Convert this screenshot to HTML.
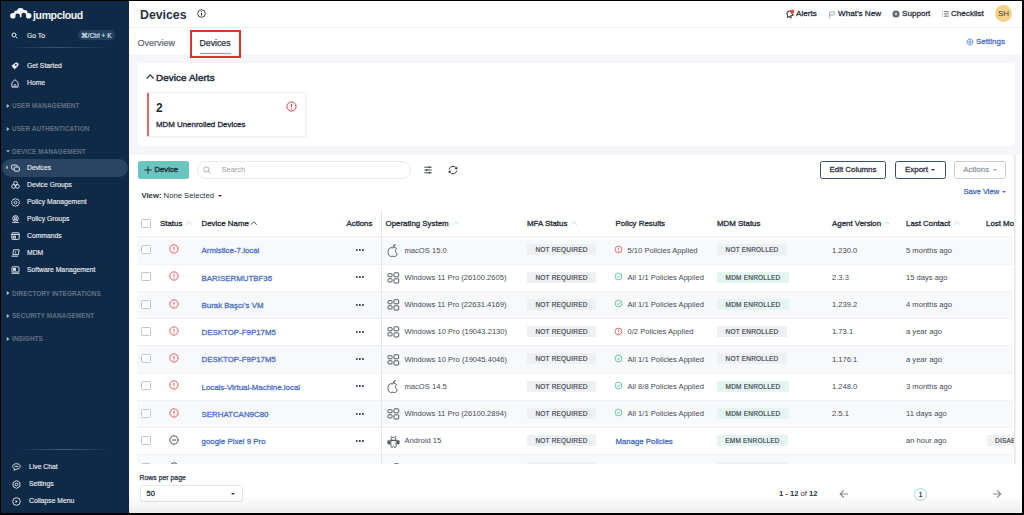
<!DOCTYPE html>
<html><head><meta charset="utf-8">
<style>
*{margin:0;padding:0;box-sizing:border-box}
html,body{width:1024px;height:515px;overflow:hidden;background:#000;font-family:"Liberation Sans",sans-serif}
.a{position:absolute}
#frame{position:absolute;left:1px;top:1px;width:1021px;height:512px;background:#fff;overflow:hidden}
#side{position:absolute;left:0;top:0;width:128px;height:512px;background:#0f2a47}
.si{position:absolute;left:26px;font-size:6.8px;color:#eef1f5;white-space:nowrap;line-height:10px;-webkit-text-stroke:0.12px #eef1f5}
.sh{position:absolute;left:11px;font-size:6.4px;font-weight:bold;color:#617084;white-space:nowrap;line-height:10px;letter-spacing:0.1px}
.car{position:absolute;left:4.8px;width:0;height:0;border-top:1.7px solid transparent;border-bottom:1.7px solid transparent;border-left:2.4px solid #b8c0ca}
.ic{position:absolute;left:10px}
.hdr{font-size:8.1px;color:#2b3340;line-height:10px;white-space:nowrap;-webkit-text-stroke:0.3px #2b3340}
.th{font-size:7.9px;color:#2f3742;line-height:10px;white-space:nowrap;-webkit-text-stroke:0.35px #2f3742}
.td{font-size:7.6px;color:#444b55;line-height:10px;white-space:nowrap}
.dn{font-size:7.9px;color:#4f72c2;line-height:10px;white-space:nowrap;-webkit-text-stroke:0.3px #4f72c2}
.badge{height:11px;background:#eef0f3;font-size:6.5px;color:#363d48;letter-spacing:0.2px;line-height:11px;text-align:center;white-space:nowrap;-webkit-text-stroke:0.15px #363d48}
.btn{height:17.5px;border:1px solid #3c4f68;border-radius:2.5px;font-size:7.9px;-webkit-text-stroke:0.3px currentColor;color:#2b3340;text-align:center;line-height:15.5px;background:#fff;white-space:nowrap}
</style></head>
<body>
<div id="frame">
  <div id="side">
    <!-- logo -->
    <svg class="a" style="left:8.5px;top:6.5px" width="22" height="12" viewBox="0 0 22 12">
      <g fill="#f4f6f9">
        <circle cx="2.9" cy="7.8" r="2.8"/>
        <circle cx="18.6" cy="7.8" r="2.8"/>
        <circle cx="10.5" cy="3.5" r="3.4"/>
        <circle cx="14.8" cy="4.8" r="2.8"/>
        <circle cx="6.6" cy="5.2" r="2.6"/>
        <rect x="2.9" y="5" width="15.7" height="4.6"/>
      </g>
      <g fill="#0f2a47">
        <rect x="5.4" y="5.6" width="4.5" height="9" rx="2.25"/>
        <rect x="11.5" y="4.8" width="4.6" height="9" rx="2.3"/>
        <rect x="9.5" y="9.3" width="2.5" height="3"/>
      </g>
    </svg>
    <div class="a" style="left:32px;top:8px;font-size:10.5px;font-weight:bold;color:#f4f6f9;line-height:12px;letter-spacing:-0.35px">jumpcloud</div>
    <!-- go to -->
    <svg class="a" style="left:10px;top:31px" width="7" height="7" viewBox="0 0 7 7"><circle cx="3" cy="3" r="2" fill="none" stroke="#e8ecf1" stroke-width="1"/><path d="M4.5 4.5L6.3 6.3" stroke="#e8ecf1" stroke-width="1"/></svg>
    <div class="si" style="top:30px">Go To</div>
    <div class="a" style="left:76.7px;top:28.7px;width:37px;height:10.8px;border-radius:5px;background:#25405e;color:#dfe5ec;font-size:6.5px;line-height:11px;text-align:center;white-space:nowrap;-webkit-text-stroke:0.15px #dfe5ec">⌘/Ctrl + K</div>
    <div class="a" style="left:8px;top:46.4px;width:104px;height:1px;background:linear-gradient(90deg,rgba(80,105,135,0),rgba(80,105,135,.65) 45%,rgba(80,105,135,0))"></div>
    <!-- items -->
    <svg class="ic" style="top:60.5px" width="8" height="8" viewBox="0 0 8 8"><ellipse cx="4.5" cy="3.5" rx="3.4" ry="2.2" transform="rotate(-40 4.5 3.5)" fill="#eef1f5"/><path d="M2.2 2.6L0.3 3.4L1.3 4.8ZM3.6 5.4L3 7.6L4.6 6.6Z" fill="#eef1f5"/><circle cx="4.9" cy="3.1" r="1" fill="#0f2a47"/></svg>
    <div class="si" style="top:60px">Get Started</div>
    <svg class="ic" style="top:77.5px" width="8" height="9" viewBox="0 0 8 9"><path d="M0.9 3.6L4 0.7L7.1 3.6V8.1H0.9Z" fill="none" stroke="#eef1f5" stroke-width="0.9" stroke-linejoin="round"/><path d="M3.1 8.1V6.2C3.1 5.7 3.5 5.4 4 5.4C4.5 5.4 4.9 5.7 4.9 6.2V8.1" fill="none" stroke="#eef1f5" stroke-width="0.8"/></svg>
    <div class="si" style="top:77px">Home</div>

    <svg class="a" style="left:4.5px;top:103px" width="4" height="4" viewBox="0 0 4 4"><path d="M0.7 0.1L3.5 2L0.7 3.9Z" fill="#b8c0ca"/></svg><div class="sh" style="top:100.45px">USER MANAGEMENT</div>
    <svg class="a" style="left:4.5px;top:126px" width="4" height="4" viewBox="0 0 4 4"><path d="M0.7 0.1L3.5 2L0.7 3.9Z" fill="#b8c0ca"/></svg><div class="sh" style="top:123.05px">USER AUTHENTICATION</div>
    <svg class="a" style="left:4.5px;top:148.5px" width="4" height="3" viewBox="0 0 4 3"><path d="M0.2 0.3H3.8L2 2.6Z" fill="#b8c0ca"/></svg><div class="sh" style="top:145.65px">DEVICE MANAGEMENT</div>

    <div class="a" style="left:1px;top:158px;width:126px;height:18px;border-radius:9px;background:#2a4462"></div>
    <div class="a" style="left:4.5px;top:165.3px;width:2.4px;height:2.4px;border-radius:50%;background:#5fc6bd"></div>
    <svg class="ic" style="top:163px" width="9" height="8" viewBox="0 0 9 8"><rect x="0.6" y="1" width="5.5" height="4.2" rx="0.6" fill="none" stroke="#eef1f5" stroke-width="0.9"/><rect x="3.2" y="3" width="5.2" height="4.2" rx="0.6" fill="#2a4462" stroke="#eef1f5" stroke-width="0.9"/></svg>
    <div class="si" style="top:162px">Devices</div>
    <svg class="ic" style="top:179.5px" width="9" height="8" viewBox="0 0 9 8"><g fill="none" stroke="#eef1f5" stroke-width="0.9"><circle cx="4.5" cy="2.4" r="1.9"/><circle cx="2.6" cy="5.4" r="1.9"/><circle cx="6.4" cy="5.4" r="1.9"/></g></svg>
    <div class="si" style="top:179px">Device Groups</div>
    <svg class="ic" style="top:196.5px" width="9" height="9" viewBox="0 0 9 9"><g fill="none" stroke="#eef1f5" stroke-width="0.9"><path d="M4.5 0.6L5.6 1.3L6.9 1.2L7.4 2.4L8.4 3.3L8 4.5L8.4 5.7L7.4 6.6L6.9 7.8L5.6 7.7L4.5 8.4L3.4 7.7L2.1 7.8L1.6 6.6L0.6 5.7L1 4.5L0.6 3.3L1.6 2.4L2.1 1.2L3.4 1.3Z"/><circle cx="4.5" cy="4.5" r="1.4"/></g></svg>
    <div class="si" style="top:196px">Policy Management</div>
    <svg class="ic" style="top:213.5px" width="9" height="8" viewBox="0 0 9 8"><g fill="none" stroke="#eef1f5" stroke-width="0.9"><circle cx="4.5" cy="3.4" r="2.8"/><circle cx="4.5" cy="3" r="1.1"/><path d="M2.4 5.4C2.8 4.6 3.6 4.3 4.5 4.3C5.4 4.3 6.2 4.6 6.6 5.4M1.2 7.4H7.8"/></g></svg>
    <div class="si" style="top:213px">Policy Groups</div>
    <svg class="ic" style="top:230.5px" width="9" height="8" viewBox="0 0 9 8"><g fill="none" stroke="#eef1f5" stroke-width="0.9"><rect x="0.8" y="0.8" width="7.4" height="6.6" rx="0.6"/><path d="M0.8 2.5H8.2"/><rect x="2.2" y="4.2" width="2.2" height="1.8"/></g></svg>
    <div class="si" style="top:230px">Commands</div>
    <svg class="ic" style="top:248px" width="9" height="8" viewBox="0 0 9 8"><g fill="none" stroke="#eef1f5" stroke-width="0.9"><path d="M2.6 0.8H8.2L7.4 5.6H1.8Z"/><path d="M0.4 7.2H7.2M4.6 2.4V4.4"/></g></svg>
    <div class="si" style="top:247px">MDM</div>
    <svg class="ic" style="top:264.5px" width="9" height="8" viewBox="0 0 9 8"><g fill="none" stroke="#eef1f5" stroke-width="0.9"><rect x="1" y="0.8" width="7" height="5.2" rx="0.5"/><path d="M0.4 7.3H8.6"/><rect x="2.6" y="2.4" width="1.8" height="2"/></g></svg>
    <div class="si" style="top:264px">Software Management</div>

    <svg class="a" style="left:4.5px;top:290px" width="4" height="4" viewBox="0 0 4 4"><path d="M0.7 0.1L3.5 2L0.7 3.9Z" fill="#b8c0ca"/></svg><div class="sh" style="top:287.65px">DIRECTORY INTEGRATIONS</div>
    <svg class="a" style="left:4.5px;top:313px" width="4" height="4" viewBox="0 0 4 4"><path d="M0.7 0.1L3.5 2L0.7 3.9Z" fill="#b8c0ca"/></svg><div class="sh" style="top:310.45px">SECURITY MANAGEMENT</div>
    <svg class="a" style="left:4.5px;top:336px" width="4" height="4" viewBox="0 0 4 4"><path d="M0.7 0.1L3.5 2L0.7 3.9Z" fill="#b8c0ca"/></svg><div class="sh" style="top:332.9px">INSIGHTS</div>

    <div class="a" style="left:18px;top:448px;width:92px;height:1px;background:linear-gradient(90deg,rgba(80,105,135,0),rgba(80,105,135,.8),rgba(80,105,135,0))"></div>
    <svg class="ic" style="left:11px;top:462px" width="9" height="8" viewBox="0 0 9 8"><path d="M4.5 0.7C2.3 0.7 0.7 1.9 0.7 3.4C0.7 4.4 1.4 5.2 2.4 5.7L2 7.3L3.9 6.1C4.1 6.1 4.3 6.1 4.5 6.1C6.7 6.1 8.3 4.9 8.3 3.4C8.3 1.9 6.7 0.7 4.5 0.7Z M2.6 3.4H6.4" fill="none" stroke="#eef1f5" stroke-width="0.9"/></svg>
    <div class="si" style="top:460.6px;left:28px">Live Chat</div>
    <svg class="ic" style="left:11px;top:479px" width="9" height="9" viewBox="0 0 9 9"><path d="M4.5 0.6L7.9 2.5V6.5L4.5 8.4L1.1 6.5V2.5Z" fill="none" stroke="#eef1f5" stroke-width="0.9"/><circle cx="4.5" cy="4.5" r="1.4" fill="none" stroke="#eef1f5" stroke-width="0.9"/></svg>
    <div class="si" style="top:477.6px;left:28px">Settings</div>
    <svg class="ic" style="left:11px;top:496px" width="9" height="9" viewBox="0 0 9 9"><circle cx="4.5" cy="4.5" r="3.8" fill="none" stroke="#eef1f5" stroke-width="0.9"/><path d="M3.6 3L5.6 4.5L3.6 6Z" fill="#eef1f5"/></svg>
    <div class="si" style="top:494.6px;left:28px">Collapse Menu</div>
  </div>
  <!-- MAIN -->
  <div id="main" class="a" style="left:128px;top:0;width:893px;height:512px;background:#f6f6fa">
    <!-- header -->
    <div class="a" style="left:0;top:0;width:893px;height:26.5px;background:#fff;border-bottom:1px solid #f1f2f5"></div>
    <div class="a" style="left:11px;top:6.5px;font-size:12.3px;font-weight:bold;color:#283241;line-height:15px">Devices</div>
    <svg class="a" style="left:68px;top:8px" width="9" height="9" viewBox="0 0 9 9"><circle cx="4.5" cy="4.5" r="3.8" fill="none" stroke="#2b3340" stroke-width="0.9"/><path d="M4.5 4V6.6" stroke="#2b3340" stroke-width="1"/><circle cx="4.5" cy="2.7" r="0.6" fill="#2b3340"/></svg>
    <!-- right header -->
    <svg class="a" style="left:656.3px;top:7.6px" width="10" height="10" viewBox="0 0 10 10"><g transform="rotate(-22 5 5)"><path d="M1.6 7.2C2.2 6.6 2.2 6 2.2 4.8C2.2 3.1 3.3 1.9 4.6 1.9C5.9 1.9 7 3.1 7 4.8C7 6 7 6.6 7.6 7.2Z M3.7 8.2C3.9 8.8 5.3 8.8 5.5 8.2" fill="none" stroke="#2b3340" stroke-width="1"/></g><circle cx="7.3" cy="2.6" r="2.1" fill="#e04848"/></svg>
    <div class="a hdr" style="left:667px;top:8px">Alerts</div>
    <svg class="a" style="left:699.5px;top:9.5px" width="6" height="8" viewBox="0 0 6 8"><path d="M0.7 7.4V0.9H5.2V3.9H0.7" fill="none" stroke="#8d939b" stroke-width="0.75"/></svg>
    <div class="a hdr" style="left:709px;top:8px">What’s New</div>
    <svg class="a" style="left:762.5px;top:9.2px" width="8" height="8" viewBox="0 0 8 8"><circle cx="4" cy="4" r="3.5" fill="#5a616c"/><path d="M4 2.3V5.7M2.3 4H5.7" stroke="#fff" stroke-width="0.75"/></svg>
    <div class="a hdr" style="left:773px;top:8px">Support</div>
    <svg class="a" style="left:812.8px;top:9.6px" width="7" height="6" viewBox="0 0 7 6"><path d="M0.2 0.6H1M0.2 2.9H1M0.2 5.2H1M2 0.6H6.8M2 2.9H6.8M2 5.2H6.8" stroke="#3f4650" stroke-width="0.75"/></svg>
    <div class="a hdr" style="left:822px;top:8px">Checklist</div>
    <div class="a" style="left:865.8px;top:3.7px;width:17.3px;height:17.3px;border-radius:50%;background:#f5d38a;color:#3f3b35;font-size:8px;line-height:17.3px;text-align:center">SH</div>
    <!-- tabs -->
    <div class="a" style="left:0;top:27px;width:893px;height:26px;background:#fff"></div>
    <div class="a" style="left:8.6px;top:36.5px;font-size:9px;color:#5f6670;line-height:10px;-webkit-text-stroke:0.2px #5f6670">Overview</div>
    <div class="a" style="left:70.6px;top:36.5px;font-size:8.7px;color:#2b3340;line-height:10px;-webkit-text-stroke:0.25px #2b3340">Devices</div>
    <div class="a" style="left:70.6px;top:52px;width:31.5px;height:1px;background:#5bbfb8"></div>
    <div class="a" style="left:61.2px;top:29.4px;width:51.2px;height:27.5px;border:2.2px solid #d9362e"></div>
    <svg class="a" style="left:837px;top:37px" width="8" height="8" viewBox="0 0 8 8"><path d="M4 0.8L6.8 2.4V5.6L4 7.2L1.2 5.6V2.4Z" fill="none" stroke="#4a78cc" stroke-width="0.8"/><circle cx="4" cy="4" r="1.2" fill="none" stroke="#4a78cc" stroke-width="0.8"/></svg>
    <div class="a" style="left:847px;top:36px;font-size:8px;color:#4f72c2;line-height:10px;-webkit-text-stroke:0.3px #4f72c2">Settings</div>
    <!-- device alerts card -->
    <div class="a" style="left:9px;top:62px;width:876px;height:82.5px;background:#fff;border-radius:3px"></div>
    <svg class="a" style="left:17px;top:72.3px" width="9" height="7" viewBox="0 0 9 7"><path d="M0.8 5.5L4.2 1.9L7.6 5.5" fill="none" stroke="#2b3340" stroke-width="1.2"/></svg>
    <div class="a" style="left:27px;top:71px;font-size:9.8px;letter-spacing:0.12px;color:#283241;line-height:12px;-webkit-text-stroke:0.5px #283241">Device Alerts</div>
    <div class="a" style="left:18px;top:90.5px;width:159px;height:45px;background:#fff;border:1px solid #f0f1f4;border-left:2px solid #e46a68;border-radius:2px;box-shadow:1px 1px 3px rgba(0,0,0,.05)"></div>
    <div class="a" style="left:27px;top:100px;font-size:12px;font-weight:bold;color:#1f2937;line-height:14px">2</div>
    <div class="a" style="left:27px;top:118.5px;font-size:7.9px;color:#1f2937;line-height:10px;-webkit-text-stroke:0.3px #1f2937">MDM Unenrolled Devices</div>
    <svg class="a" style="left:157px;top:100.2px" width="11" height="11" viewBox="0 0 11 11"><circle cx="5.5" cy="5.5" r="4.6" fill="none" stroke="#d9433b" stroke-width="1"/><path d="M5.5 2.8V6.2" stroke="#d9433b" stroke-width="1.1"/><circle cx="5.5" cy="7.9" r="0.65" fill="#d9433b"/></svg>
    <!-- table section -->
    <div id="tsec" class="a" style="left:1px;top:154px;width:892px;height:358px;background:#fff"></div>
  </div>

  <div id="pg" class="a" style="left:-1px;top:-1px;width:1024px;height:515px">
    <!-- toolbar -->
    <div class="a" style="left:137.5px;top:161px;width:51px;height:17.5px;border-radius:2.5px;background:#6ac5bf"></div>
    <svg class="a" style="left:144px;top:165.8px" width="8" height="8" viewBox="0 0 8 8"><path d="M4 0.3V7.7M0.3 4H7.7" stroke="#1f2d3d" stroke-width="0.95"/></svg>
    <div class="a" style="left:154.5px;top:165px;font-size:7.7px;color:#1f2d3d;line-height:10px;-webkit-text-stroke:0.35px #1f2d3d">Device</div>
    <div class="a" style="left:197px;top:161px;width:214px;height:17.5px;border-radius:9px;border:1px solid #e8eaee;background:#fff"></div>
    <svg class="a" style="left:203px;top:165.6px" width="8" height="8" viewBox="0 0 8 8"><circle cx="3.4" cy="3.4" r="2.6" fill="none" stroke="#9ba1a9" stroke-width="0.85"/><path d="M5.3 5.3L7.4 7.4" stroke="#9ba1a9" stroke-width="0.95"/></svg>
    <div class="a" style="left:221.5px;top:165px;font-size:7.5px;color:#9aa0a8;line-height:10px">Search</div>
    <svg class="a" style="left:423.5px;top:166px" width="8" height="8" viewBox="0 0 8 8"><g stroke="#2b3340" stroke-width="0.9"><path d="M0.3 1.2H7.7M0.3 4H7.7M0.3 6.8H7.7"/></g><g fill="#2b3340"><rect x="4.8" y="0.3" width="1" height="1.8"/><rect x="2.2" y="3.1" width="1" height="1.8"/><rect x="4.8" y="5.9" width="1" height="1.8"/></g></svg>
    <svg class="a" style="left:448px;top:165px" width="10" height="10" viewBox="0 0 10 10"><path d="M1.3 4.4C1.6 2.5 3.2 1.2 5 1.2C6.1 1.2 7.1 1.7 7.8 2.5M8.7 5.6C8.4 7.5 6.8 8.8 5 8.8C3.9 8.8 2.9 8.3 2.2 7.5" fill="none" stroke="#2b3340" stroke-width="1"/><path d="M9.3 1.4V4.3H6.4Z" fill="#2b3340"/><path d="M0.7 8.6V5.7H3.6Z" fill="#2b3340"/></svg>
    <div class="a btn" style="left:820px;top:161px;width:66px">Edit Columns</div>
    <div class="a btn" style="left:894.5px;top:161px;width:51px;padding-right:7px">Export</div>
    <div class="a" style="left:931px;top:168.5px;width:0;height:0;border-left:2px solid transparent;border-right:2px solid transparent;border-top:2.2px solid #2b3340"></div>
    <div class="a btn" style="left:954px;top:161px;width:51.5px;border-color:#c9cdd3;color:#9aa0a8;padding-right:7px">Actions</div>
    <div class="a" style="left:993px;top:168.5px;width:0;height:0;border-left:2px solid transparent;border-right:2px solid transparent;border-top:2.2px solid #a5abb2"></div>
    <div class="a" style="left:963.5px;top:187px;font-size:7.6px;color:#4f72c2;line-height:10px;-webkit-text-stroke:0.3px #4f72c2">Save View</div>
    <div class="a" style="left:1002px;top:190.5px;width:0;height:0;border-left:2px solid transparent;border-right:2px solid transparent;border-top:2.2px solid #4a74c9"></div>
    <div class="a" style="left:141.5px;top:191px;font-size:7.7px;color:#2b3340;line-height:10px;white-space:nowrap"><b>View:</b> None Selected</div>
    <div class="a" style="left:218px;top:195px;width:0;height:0;border-left:2px solid transparent;border-right:2px solid transparent;border-top:2.2px solid #2b3340"></div>
    <!-- table -->
    <div id="tclip" class="a" style="left:0;top:0;width:1013.5px;height:464px;overflow:hidden">
<!--T-->
<div class="a" style="left:141px;top:219px;width:9.5px;height:9px;border:1px solid #c1c5cc;border-radius:1.5px;background:#fff"></div>
<div class="a th" style="left:160px;top:219px;">Status</div>
<div class="a th" style="left:201.5px;top:219px;">Device Name</div>
<div class="a th" style="left:385.5px;top:219px;">Operating System</div>
<div class="a th" style="left:527px;top:219px;">MFA Status</div>
<div class="a th" style="left:615.5px;top:219px;">Policy Results</div>
<div class="a th" style="left:717px;top:219px;">MDM Status</div>
<div class="a th" style="left:832px;top:219px;">Agent Version</div>
<div class="a th" style="left:906px;top:219px;">Last Contact</div>
<div class="a th" style="left:986px;top:219px;">Lost Mode</div>
<div class="a th" style="left:346.5px;top:219px;">Actions</div>
<svg class="a" style="left:184.5px;top:220px" width="8" height="6" viewBox="0 0 8 6"><path d="M0.9 4.7L3.8 1.7L6.7 4.7" fill="none" stroke="#c9ced5" stroke-width="0.9"/></svg>
<svg class="a" style="left:250px;top:220px" width="8" height="6" viewBox="0 0 8 6"><path d="M0.9 4.7L3.8 1.7L6.7 4.7" fill="none" stroke="#3a414b" stroke-width="0.9"/></svg>
<svg class="a" style="left:451.5px;top:220px" width="8" height="6" viewBox="0 0 8 6"><path d="M0.9 4.7L3.8 1.7L6.7 4.7" fill="none" stroke="#c9ced5" stroke-width="0.9"/></svg>
<svg class="a" style="left:569.5px;top:220px" width="8" height="6" viewBox="0 0 8 6"><path d="M0.9 4.7L3.8 1.7L6.7 4.7" fill="none" stroke="#c9ced5" stroke-width="0.9"/></svg>
<svg class="a" style="left:883px;top:220px" width="8" height="6" viewBox="0 0 8 6"><path d="M0.9 4.7L3.8 1.7L6.7 4.7" fill="none" stroke="#c9ced5" stroke-width="0.9"/></svg>
<svg class="a" style="left:953px;top:220px" width="8" height="6" viewBox="0 0 8 6"><path d="M0.9 4.7L3.8 1.7L6.7 4.7" fill="none" stroke="#c9ced5" stroke-width="0.9"/></svg>
<div class="a" style="left:137px;top:236.3px;width:876px;height:27.25px;background:#f8f9fb;border-top:1px solid #f1f2f5"></div>
<div class="a" style="left:141px;top:245.125px;width:9.5px;height:9px;border:1px solid #c1c5cc;border-radius:1.5px;background:#fff"></div>
<svg class="a" style="left:168.5px;top:244.125px" width="10" height="10" viewBox="0 0 10 10"><circle cx="5" cy="5" r="4.15" fill="none" stroke="#df5552" stroke-width="0.95"/><path d="M5 2.9V5.6" stroke="#df5552" stroke-width="1"/><circle cx="5" cy="7.05" r="0.55" fill="#df5552"/></svg>
<div class="a dn" style="left:201.5px;top:246.32500000000002px;">Armistice-7.local</div>
<div class="a" style="left:355.5px;top:249.025px;width:8.5px;height:2px;background:radial-gradient(circle at 1px 1px,#3b4a63 0.8px,transparent 1.05px) 0 0/3.1px 2px repeat-x"></div>
<svg class="a" style="left:387px;top:242.72500000000002px" width="11" height="14" viewBox="0 0 11 14"><path d="M5.6 4.9C6.6 4.4 8.6 4.3 9.6 5.7C8.6 6.4 8.3 7.4 8.4 8.4C8.5 9.6 9.3 10.4 10.3 10.8C10 11.9 9.4 12.7 8.8 13.2C8.2 13.7 7.6 13.6 7 13.4C6.3 13.1 5.2 13.1 4.5 13.4C3.9 13.6 3.3 13.7 2.7 13.1C1.5 11.8 0.9 10.2 1 8.5C1.1 6.3 2.5 4.8 4.1 4.7C4.6 4.7 5.1 4.8 5.6 4.9Z" fill="none" stroke="#4f5660" stroke-width="0.95"/><path d="M5.6 4.4C5.7 3 6.5 1.8 8.6 1.1C8.5 2.6 7.6 3.9 5.6 4.4Z" fill="#4f5660"/></svg>
<div class="a td" style="left:404.5px;top:245.72500000000002px;">macOS 15.0</div>
<div class="a badge" style="left:527px;top:244.425px;width:69px">NOT REQUIRED</div>
<svg class="a" style="left:614.4px;top:244.925px" width="9" height="9" viewBox="0 0 9 9"><circle cx="4.5" cy="4.5" r="3.4" fill="none" stroke="#e06464" stroke-width="0.9"/><path d="M4.5 2.7V4.9" stroke="#e06464" stroke-width="0.9"/><circle cx="4.5" cy="6.2" r="0.5" fill="#e06464"/></svg>
<div class="a td" style="left:627.5px;top:245.72500000000002px;">5/10 Policies Applied</div>
<div class="a badge" style="left:717px;top:244.425px;width:70px;background:#eef0f3">NOT ENROLLED</div>
<div class="a td" style="left:832px;top:245.72500000000002px;">1.230.0</div>
<div class="a td" style="left:906px;top:245.72500000000002px;">5 months ago</div>
<div class="a" style="left:137px;top:263.55px;width:876px;height:27.25px;background:#fff;border-top:1px solid #f1f2f5"></div>
<div class="a" style="left:141px;top:272.375px;width:9.5px;height:9px;border:1px solid #c1c5cc;border-radius:1.5px;background:#fff"></div>
<svg class="a" style="left:168.5px;top:271.375px" width="10" height="10" viewBox="0 0 10 10"><circle cx="5" cy="5" r="4.15" fill="none" stroke="#df5552" stroke-width="0.95"/><path d="M5 2.9V5.6" stroke="#df5552" stroke-width="1"/><circle cx="5" cy="7.05" r="0.55" fill="#df5552"/></svg>
<div class="a dn" style="left:201.5px;top:273.575px;">BARISERMUTBF36</div>
<div class="a" style="left:355.5px;top:276.27500000000003px;width:8.5px;height:2px;background:radial-gradient(circle at 1px 1px,#3b4a63 0.8px,transparent 1.05px) 0 0/3.1px 2px repeat-x"></div>
<svg class="a" style="left:386.5px;top:271.875px" width="13" height="12" viewBox="0 0 13 12"><g fill="none" stroke="#4f5660" stroke-width="1"><rect x="1" y="1.7" width="4.1" height="3.1" rx="0.7"/><rect x="1" y="6.8" width="4.1" height="3.1" rx="0.7"/><rect x="7" y="0.8" width="4.7" height="4" rx="0.7"/><rect x="7" y="6.8" width="4.7" height="4.2" rx="0.7"/></g></svg>
<div class="a td" style="left:404.5px;top:272.975px;">Windows 11 Pro (26100.2605)</div>
<div class="a badge" style="left:527px;top:271.675px;width:69px">NOT REQUIRED</div>
<svg class="a" style="left:614.4px;top:272.175px" width="9" height="9" viewBox="0 0 9 9"><circle cx="4.5" cy="4.5" r="3.4" fill="none" stroke="#5cc298" stroke-width="0.9"/><path d="M3 4.6L4.1 5.7L6.1 3.5" fill="none" stroke="#5cc298" stroke-width="0.9"/></svg>
<div class="a td" style="left:627.5px;top:272.975px;">All 1/1 Policies Applied</div>
<div class="a badge" style="left:717px;top:271.675px;width:72px;background:#e5f5f2">MDM ENROLLED</div>
<div class="a td" style="left:832px;top:272.975px;">2.3.3</div>
<div class="a td" style="left:906px;top:272.975px;">15 days ago</div>
<div class="a" style="left:137px;top:290.8px;width:876px;height:27.25px;background:#f8f9fb;border-top:1px solid #f1f2f5"></div>
<div class="a" style="left:141px;top:299.625px;width:9.5px;height:9px;border:1px solid #c1c5cc;border-radius:1.5px;background:#fff"></div>
<svg class="a" style="left:168.5px;top:298.625px" width="10" height="10" viewBox="0 0 10 10"><circle cx="5" cy="5" r="4.15" fill="none" stroke="#df5552" stroke-width="0.95"/><path d="M5 2.9V5.6" stroke="#df5552" stroke-width="1"/><circle cx="5" cy="7.05" r="0.55" fill="#df5552"/></svg>
<div class="a dn" style="left:201.5px;top:300.825px;">Burak Başcı's VM</div>
<div class="a" style="left:355.5px;top:303.52500000000003px;width:8.5px;height:2px;background:radial-gradient(circle at 1px 1px,#3b4a63 0.8px,transparent 1.05px) 0 0/3.1px 2px repeat-x"></div>
<svg class="a" style="left:386.5px;top:299.125px" width="13" height="12" viewBox="0 0 13 12"><g fill="none" stroke="#4f5660" stroke-width="1"><rect x="1" y="1.7" width="4.1" height="3.1" rx="0.7"/><rect x="1" y="6.8" width="4.1" height="3.1" rx="0.7"/><rect x="7" y="0.8" width="4.7" height="4" rx="0.7"/><rect x="7" y="6.8" width="4.7" height="4.2" rx="0.7"/></g></svg>
<div class="a td" style="left:404.5px;top:300.225px;">Windows 11 Pro (22631.4169)</div>
<div class="a badge" style="left:527px;top:298.925px;width:69px">NOT REQUIRED</div>
<svg class="a" style="left:614.4px;top:299.425px" width="9" height="9" viewBox="0 0 9 9"><circle cx="4.5" cy="4.5" r="3.4" fill="none" stroke="#5cc298" stroke-width="0.9"/><path d="M3 4.6L4.1 5.7L6.1 3.5" fill="none" stroke="#5cc298" stroke-width="0.9"/></svg>
<div class="a td" style="left:627.5px;top:300.225px;">All 1/1 Policies Applied</div>
<div class="a badge" style="left:717px;top:298.925px;width:72px;background:#e5f5f2">MDM ENROLLED</div>
<div class="a td" style="left:832px;top:300.225px;">1.239.2</div>
<div class="a td" style="left:906px;top:300.225px;">4 months ago</div>
<div class="a" style="left:137px;top:318.05px;width:876px;height:27.25px;background:#fff;border-top:1px solid #f1f2f5"></div>
<div class="a" style="left:141px;top:326.875px;width:9.5px;height:9px;border:1px solid #c1c5cc;border-radius:1.5px;background:#fff"></div>
<svg class="a" style="left:168.5px;top:325.875px" width="10" height="10" viewBox="0 0 10 10"><circle cx="5" cy="5" r="4.15" fill="none" stroke="#df5552" stroke-width="0.95"/><path d="M5 2.9V5.6" stroke="#df5552" stroke-width="1"/><circle cx="5" cy="7.05" r="0.55" fill="#df5552"/></svg>
<div class="a dn" style="left:201.5px;top:328.075px;">DESKTOP-F9P17M5</div>
<div class="a" style="left:355.5px;top:330.77500000000003px;width:8.5px;height:2px;background:radial-gradient(circle at 1px 1px,#3b4a63 0.8px,transparent 1.05px) 0 0/3.1px 2px repeat-x"></div>
<svg class="a" style="left:386.5px;top:326.375px" width="13" height="12" viewBox="0 0 13 12"><g fill="none" stroke="#4f5660" stroke-width="1"><rect x="1" y="1.7" width="4.1" height="3.1" rx="0.7"/><rect x="1" y="6.8" width="4.1" height="3.1" rx="0.7"/><rect x="7" y="0.8" width="4.7" height="4" rx="0.7"/><rect x="7" y="6.8" width="4.7" height="4.2" rx="0.7"/></g></svg>
<div class="a td" style="left:404.5px;top:327.475px;">Windows 10 Pro (19043.2130)</div>
<div class="a badge" style="left:527px;top:326.175px;width:69px">NOT REQUIRED</div>
<svg class="a" style="left:614.4px;top:326.675px" width="9" height="9" viewBox="0 0 9 9"><circle cx="4.5" cy="4.5" r="3.4" fill="none" stroke="#e06464" stroke-width="0.9"/><path d="M4.5 2.7V4.9" stroke="#e06464" stroke-width="0.9"/><circle cx="4.5" cy="6.2" r="0.5" fill="#e06464"/></svg>
<div class="a td" style="left:627.5px;top:327.475px;">0/2 Policies Applied</div>
<div class="a badge" style="left:717px;top:326.175px;width:70px;background:#eef0f3">NOT ENROLLED</div>
<div class="a td" style="left:832px;top:327.475px;">1.73.1</div>
<div class="a td" style="left:906px;top:327.475px;">a year ago</div>
<div class="a" style="left:137px;top:345.3px;width:876px;height:27.25px;background:#f8f9fb;border-top:1px solid #f1f2f5"></div>
<div class="a" style="left:141px;top:354.125px;width:9.5px;height:9px;border:1px solid #c1c5cc;border-radius:1.5px;background:#fff"></div>
<svg class="a" style="left:168.5px;top:353.125px" width="10" height="10" viewBox="0 0 10 10"><circle cx="5" cy="5" r="4.15" fill="none" stroke="#df5552" stroke-width="0.95"/><path d="M5 2.9V5.6" stroke="#df5552" stroke-width="1"/><circle cx="5" cy="7.05" r="0.55" fill="#df5552"/></svg>
<div class="a dn" style="left:201.5px;top:355.325px;">DESKTOP-F9P17M5</div>
<div class="a" style="left:355.5px;top:358.02500000000003px;width:8.5px;height:2px;background:radial-gradient(circle at 1px 1px,#3b4a63 0.8px,transparent 1.05px) 0 0/3.1px 2px repeat-x"></div>
<svg class="a" style="left:386.5px;top:353.625px" width="13" height="12" viewBox="0 0 13 12"><g fill="none" stroke="#4f5660" stroke-width="1"><rect x="1" y="1.7" width="4.1" height="3.1" rx="0.7"/><rect x="1" y="6.8" width="4.1" height="3.1" rx="0.7"/><rect x="7" y="0.8" width="4.7" height="4" rx="0.7"/><rect x="7" y="6.8" width="4.7" height="4.2" rx="0.7"/></g></svg>
<div class="a td" style="left:404.5px;top:354.725px;">Windows 10 Pro (19045.4046)</div>
<div class="a badge" style="left:527px;top:353.425px;width:69px">NOT REQUIRED</div>
<svg class="a" style="left:614.4px;top:353.925px" width="9" height="9" viewBox="0 0 9 9"><circle cx="4.5" cy="4.5" r="3.4" fill="none" stroke="#5cc298" stroke-width="0.9"/><path d="M3 4.6L4.1 5.7L6.1 3.5" fill="none" stroke="#5cc298" stroke-width="0.9"/></svg>
<div class="a td" style="left:627.5px;top:354.725px;">All 1/1 Policies Applied</div>
<div class="a badge" style="left:717px;top:353.425px;width:70px;background:#eef0f3">NOT ENROLLED</div>
<div class="a td" style="left:832px;top:354.725px;">1.176.1</div>
<div class="a td" style="left:906px;top:354.725px;">a year ago</div>
<div class="a" style="left:137px;top:372.55px;width:876px;height:27.25px;background:#fff;border-top:1px solid #f1f2f5"></div>
<div class="a" style="left:141px;top:381.375px;width:9.5px;height:9px;border:1px solid #c1c5cc;border-radius:1.5px;background:#fff"></div>
<svg class="a" style="left:168.5px;top:380.375px" width="10" height="10" viewBox="0 0 10 10"><circle cx="5" cy="5" r="4.15" fill="none" stroke="#df5552" stroke-width="0.95"/><path d="M5 2.9V5.6" stroke="#df5552" stroke-width="1"/><circle cx="5" cy="7.05" r="0.55" fill="#df5552"/></svg>
<div class="a dn" style="left:201.5px;top:382.575px;">Locals-Virtual-Machine.local</div>
<div class="a" style="left:355.5px;top:385.27500000000003px;width:8.5px;height:2px;background:radial-gradient(circle at 1px 1px,#3b4a63 0.8px,transparent 1.05px) 0 0/3.1px 2px repeat-x"></div>
<svg class="a" style="left:387px;top:378.975px" width="11" height="14" viewBox="0 0 11 14"><path d="M5.6 4.9C6.6 4.4 8.6 4.3 9.6 5.7C8.6 6.4 8.3 7.4 8.4 8.4C8.5 9.6 9.3 10.4 10.3 10.8C10 11.9 9.4 12.7 8.8 13.2C8.2 13.7 7.6 13.6 7 13.4C6.3 13.1 5.2 13.1 4.5 13.4C3.9 13.6 3.3 13.7 2.7 13.1C1.5 11.8 0.9 10.2 1 8.5C1.1 6.3 2.5 4.8 4.1 4.7C4.6 4.7 5.1 4.8 5.6 4.9Z" fill="none" stroke="#4f5660" stroke-width="0.95"/><path d="M5.6 4.4C5.7 3 6.5 1.8 8.6 1.1C8.5 2.6 7.6 3.9 5.6 4.4Z" fill="#4f5660"/></svg>
<div class="a td" style="left:404.5px;top:381.975px;">macOS 14.5</div>
<div class="a badge" style="left:527px;top:380.675px;width:69px">NOT REQUIRED</div>
<svg class="a" style="left:614.4px;top:381.175px" width="9" height="9" viewBox="0 0 9 9"><circle cx="4.5" cy="4.5" r="3.4" fill="none" stroke="#5cc298" stroke-width="0.9"/><path d="M3 4.6L4.1 5.7L6.1 3.5" fill="none" stroke="#5cc298" stroke-width="0.9"/></svg>
<div class="a td" style="left:627.5px;top:381.975px;">All 8/8 Policies Applied</div>
<div class="a badge" style="left:717px;top:380.675px;width:72px;background:#e5f5f2">MDM ENROLLED</div>
<div class="a td" style="left:832px;top:381.975px;">1.248.0</div>
<div class="a td" style="left:906px;top:381.975px;">3 months ago</div>
<div class="a" style="left:137px;top:399.8px;width:876px;height:27.25px;background:#f8f9fb;border-top:1px solid #f1f2f5"></div>
<div class="a" style="left:141px;top:408.625px;width:9.5px;height:9px;border:1px solid #c1c5cc;border-radius:1.5px;background:#fff"></div>
<svg class="a" style="left:168.5px;top:407.625px" width="10" height="10" viewBox="0 0 10 10"><circle cx="5" cy="5" r="4.15" fill="none" stroke="#df5552" stroke-width="0.95"/><path d="M5 2.9V5.6" stroke="#df5552" stroke-width="1"/><circle cx="5" cy="7.05" r="0.55" fill="#df5552"/></svg>
<div class="a dn" style="left:201.5px;top:409.825px;">SERHATCAN9C80</div>
<div class="a" style="left:355.5px;top:412.52500000000003px;width:8.5px;height:2px;background:radial-gradient(circle at 1px 1px,#3b4a63 0.8px,transparent 1.05px) 0 0/3.1px 2px repeat-x"></div>
<svg class="a" style="left:386.5px;top:408.125px" width="13" height="12" viewBox="0 0 13 12"><g fill="none" stroke="#4f5660" stroke-width="1"><rect x="1" y="1.7" width="4.1" height="3.1" rx="0.7"/><rect x="1" y="6.8" width="4.1" height="3.1" rx="0.7"/><rect x="7" y="0.8" width="4.7" height="4" rx="0.7"/><rect x="7" y="6.8" width="4.7" height="4.2" rx="0.7"/></g></svg>
<div class="a td" style="left:404.5px;top:409.225px;">Windows 11 Pro (26100.2894)</div>
<div class="a badge" style="left:527px;top:407.925px;width:69px">NOT REQUIRED</div>
<svg class="a" style="left:614.4px;top:408.425px" width="9" height="9" viewBox="0 0 9 9"><circle cx="4.5" cy="4.5" r="3.4" fill="none" stroke="#5cc298" stroke-width="0.9"/><path d="M3 4.6L4.1 5.7L6.1 3.5" fill="none" stroke="#5cc298" stroke-width="0.9"/></svg>
<div class="a td" style="left:627.5px;top:409.225px;">All 1/1 Policies Applied</div>
<div class="a badge" style="left:717px;top:407.925px;width:72px;background:#e5f5f2">MDM ENROLLED</div>
<div class="a td" style="left:832px;top:409.225px;">2.5.1</div>
<div class="a td" style="left:906px;top:409.225px;">11 days ago</div>
<div class="a" style="left:137px;top:427.05px;width:876px;height:27.25px;background:#fff;border-top:1px solid #f1f2f5"></div>
<div class="a" style="left:141px;top:435.875px;width:9.5px;height:9px;border:1px solid #c1c5cc;border-radius:1.5px;background:#fff"></div>
<svg class="a" style="left:168.5px;top:434.875px" width="10" height="10" viewBox="0 0 10 10"><circle cx="5" cy="5" r="4.15" fill="none" stroke="#3a414b" stroke-width="0.95"/><path d="M3.1 5H6.9" stroke="#3a414b" stroke-width="1"/></svg>
<div class="a dn" style="left:201.5px;top:437.075px;">google Pixel 9 Pro</div>
<div class="a" style="left:355.5px;top:439.77500000000003px;width:8.5px;height:2px;background:radial-gradient(circle at 1px 1px,#3b4a63 0.8px,transparent 1.05px) 0 0/3.1px 2px repeat-x"></div>
<svg class="a" style="left:386.5px;top:434.675px" width="13" height="13" viewBox="0 0 13 13"><g stroke="#4f5660" stroke-width="1" fill="none"><path d="M3.9 5.4C3.9 3.6 5 2.2 6.5 2.2C8 2.2 9.1 3.6 9.1 5.4Z"/><path d="M4.6 2.5L4 1.1M8.4 2.5L9 1.1"/><path d="M3.9 5.4V10.8C3.9 11.7 4.3 12.5 5 12.5L6.5 11.3L8 12.5C8.7 12.5 9.1 11.7 9.1 10.8V5.4"/></g><g fill="#4f5660"><rect x="3.4" y="4.8" width="6.2" height="1.2"/><rect x="0.5" y="5.2" width="2.6" height="4.2" rx="1"/><rect x="9.9" y="5.2" width="2.6" height="4.2" rx="1"/></g></svg>
<div class="a td" style="left:404.5px;top:436.475px;">Android 15</div>
<div class="a badge" style="left:527px;top:435.175px;width:69px">NOT REQUIRED</div>
<div class="a td" style="left:615.5px;top:436.675px;color:#4f72c2;-webkit-text-stroke:0.3px #4f72c2;font-size:7.8px">Manage Policies</div>
<div class="a badge" style="left:717px;top:435.175px;width:71px;background:#e5f5f2">EMM ENROLLED</div>
<div class="a td" style="left:906px;top:436.475px;">an hour ago</div>
<div class="a badge" style="left:987px;top:435.175px;width:60px;text-align:left;padding-left:8px">DISABLED</div>
<div class="a" style="left:137px;top:454.3px;width:876px;height:9.699999999999989px;background:#f8f9fb;border-top:1px solid #f1f2f5"></div>
<div class="a" style="left:141px;top:463.125px;width:9.5px;height:9px;border:1px solid #c1c5cc;border-radius:1.5px;background:#fff"></div>
<svg class="a" style="left:168.5px;top:462.125px" width="10" height="10" viewBox="0 0 10 10"><circle cx="5" cy="5" r="4.15" fill="none" stroke="#3a414b" stroke-width="0.95"/><path d="M3.1 5H6.9" stroke="#3a414b" stroke-width="1"/></svg>
<div class="a" style="left:355.5px;top:467.02500000000003px;width:8.5px;height:2px;background:radial-gradient(circle at 1px 1px,#3b4a63 0.8px,transparent 1.05px) 0 0/3.1px 2px repeat-x"></div>
<svg class="a" style="left:386.5px;top:462.625px" width="13" height="12" viewBox="0 0 13 12"><g fill="none" stroke="#4f5660" stroke-width="1"><rect x="1" y="1.7" width="4.1" height="3.1" rx="0.7"/><rect x="1" y="6.8" width="4.1" height="3.1" rx="0.7"/><rect x="7" y="0.8" width="4.7" height="4" rx="0.7"/><rect x="7" y="6.8" width="4.7" height="4.2" rx="0.7"/></g></svg>
<div class="a badge" style="left:527px;top:462.425px;width:69px">NOT REQUIRED</div>
<div class="a badge" style="left:717px;top:462.425px;width:72px;background:#e5f5f2">MDM ENROLLED</div>
<div class="a" style="left:381px;top:210px;width:1px;height:254px;background:#e3e6ea"></div>
<!--/T-->
    </div>
    <!-- scroll shadow -->
    <div class="a" style="left:1013.5px;top:155px;width:3px;height:309px;background:linear-gradient(90deg,rgba(0,0,0,.11),rgba(0,0,0,0))"></div>
    <!-- footer -->
    <div class="a" style="left:139.5px;top:472.5px;font-size:6.9px;color:#2b3340;line-height:10px;-webkit-text-stroke:0.25px #2b3340">Rows per page</div>
    <div class="a" style="left:139.5px;top:484.5px;width:103px;height:17.5px;border:1px solid #e3e6ea;border-radius:2.5px;background:#fff"></div>
    <div class="a" style="left:146.5px;top:489px;font-size:7.6px;color:#2b3340;line-height:10px;-webkit-text-stroke:0.3px #2b3340">50</div>
    <div class="a" style="left:231px;top:492.5px;width:0;height:0;border-left:2.3px solid transparent;border-right:2.3px solid transparent;border-top:2.5px solid #2b3340"></div>
    <div class="a" style="left:779px;top:489px;font-size:7.6px;color:#2b3340;line-height:10px;font-weight:bold;white-space:nowrap">1 - 12 <span style="font-weight:normal">of</span> 12</div>
    <svg class="a" style="left:838.5px;top:489px" width="10" height="10" viewBox="0 0 10 10"><path d="M9.2 5H1.2M4.8 1.4L1.2 5L4.8 8.6" fill="none" stroke="#858b93" stroke-width="1.15"/></svg>
    <div class="a" style="left:914px;top:487.5px;width:13px;height:13px;border-radius:50%;border:1px solid #a3dbd5;font-size:6.6px;font-weight:bold;color:#2b3340;text-align:center;line-height:11px">1</div>
    <svg class="a" style="left:992px;top:489px" width="10" height="10" viewBox="0 0 10 10"><path d="M0.8 5H8.8M5.2 1.4L8.8 5L5.2 8.6" fill="none" stroke="#858b93" stroke-width="1.15"/></svg>
    <div class="a" style="left:129px;top:495px;width:895px;height:19px;background:linear-gradient(rgba(0,0,0,0),rgba(0,0,0,.075))"></div>
  </div>
</div>
</body></html>
